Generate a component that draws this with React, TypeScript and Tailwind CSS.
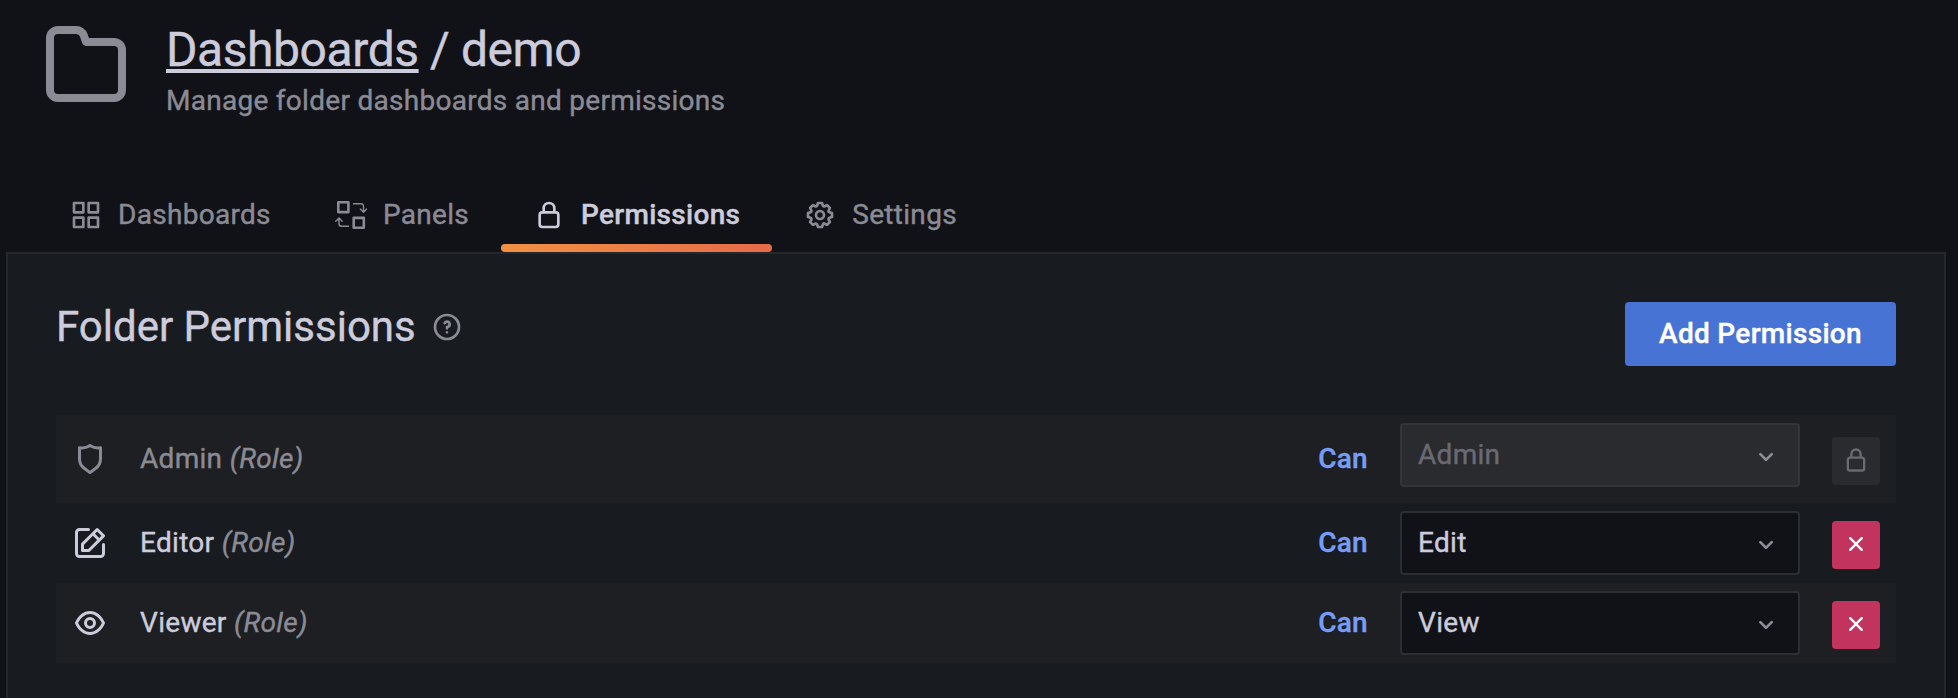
import type { ReactNode } from "react";

const PATHS = {
  folder:
    "M19,5.5H12.72l-.32-1a3,3,0,0,0-2.84-2H5a3,3,0,0,0-3,3v13a3,3,0,0,0,3,3H19a3,3,0,0,0,3-3V8.5A3,3,0,0,0,19,5.5Zm1,13a1,1,0,0,1-1,1H5a1,1,0,0,1-1-1V5.5a1,1,0,0,1,1-1H9.56a1,1,0,0,1,.95.68l.54,1.64A1,1,0,0,0,12,7.5h7a1,1,0,0,1,1,1Z",
  apps: "M10,13H3a1,1,0,0,0-1,1v7a1,1,0,0,0,1,1h7a1,1,0,0,0,1-1V14A1,1,0,0,0,10,13ZM9,20H4V15H9ZM21,2H14a1,1,0,0,0-1,1v7a1,1,0,0,0,1,1h7a1,1,0,0,0,1-1V3A1,1,0,0,0,21,2ZM20,9H15V4h5Zm1,4H14a1,1,0,0,0-1,1v7a1,1,0,0,0,1,1h7a1,1,0,0,0,1-1V14A1,1,0,0,0,21,13Zm-1,7H15V15h5ZM10,2H3A1,1,0,0,0,2,3v7a1,1,0,0,0,1,1h7a1,1,0,0,0,1-1V3A1,1,0,0,0,10,2ZM9,9H4V4H9Z",
  lock: "M17,9V7A5,5,0,0,0,7,7V9a3,3,0,0,0-3,3v7a3,3,0,0,0,3,3H17a3,3,0,0,0,3-3V12A3,3,0,0,0,17,9ZM9,7a3,3,0,0,1,6,0V9H9Zm9,12a1,1,0,0,1-1,1H7a1,1,0,0,1-1-1V12a1,1,0,0,1,1-1H17a1,1,0,0,1,1,1Z",
  cog: "M21.32,9.55l-1.89-.63.89-1.78A1,1,0,0,0,20.13,6L18,3.87a1,1,0,0,0-1.15-.19l-1.78.89-.63-1.89A1,1,0,0,0,13.5,2h-3a1,1,0,0,0-.95.68L8.92,4.57,7.14,3.68A1,1,0,0,0,6,3.87L3.87,6a1,1,0,0,0-.19,1.15l.89,1.78-1.89.63A1,1,0,0,0,2,10.5v3a1,1,0,0,0,.68.95l1.89.63-.89,1.78A1,1,0,0,0,3.87,18L6,20.13a1,1,0,0,0,1.15.19l1.78-.89.63,1.89a1,1,0,0,0,.95.68h3a1,1,0,0,0,.95-.68l.63-1.89,1.78.89A1,1,0,0,0,18,20.13L20.13,18a1,1,0,0,0,.19-1.15l-.89-1.78,1.89-.63A1,1,0,0,0,22,13.5v-3A1,1,0,0,0,21.32,9.55ZM20,12.78l-1.2.4A2,2,0,0,0,17.64,16l.57,1.14-1.1,1.1L16,17.64a2,2,0,0,0-2.79,1.16l-.4,1.2H11.22l-.4-1.2A2,2,0,0,0,8,17.64l-1.14.57-1.1-1.1L6.36,16A2,2,0,0,0,5.2,13.18L4,12.78V11.22l1.2-.4A2,2,0,0,0,6.36,8L5.79,6.89l1.1-1.1L8,6.36A2,2,0,0,0,10.82,5.2l.4-1.2h1.56l.4,1.2A2,2,0,0,0,16,6.36l1.14-.57,1.1,1.1L17.64,8a2,2,0,0,0,1.16,2.79l1.2.4ZM12,8a4,4,0,1,0,4,4A4,4,0,0,0,12,8Zm0,6a2,2,0,1,1,2-2A2,2,0,0,1,12,14Z",
  question:
    "M11.29,15.29a1.58,1.58,0,0,0-.12.15.76.76,0,0,0-.09.18.64.64,0,0,0-.06.18,1.36,1.36,0,0,0,0,.2.84.84,0,0,0,.08.38.9.9,0,0,0,.54.54.94.94,0,0,0,.76,0,.9.9,0,0,0,.54-.54A1,1,0,0,0,13,16a1,1,0,0,0-.29-.71A1,1,0,0,0,11.29,15.29ZM12,2A10,10,0,1,0,22,12,10,10,0,0,0,12,2Zm0,18a8,8,0,1,1,8-8A8,8,0,0,1,12,20ZM12,7A3,3,0,0,0,9.4,8.5a1,1,0,1,0,1.73,1A1,1,0,0,1,12,9a1,1,0,0,1,0,2,1,1,0,0,0-1,1v1a1,1,0,0,0,2,0v-.18A3,3,0,0,0,12,7Z",
  shield:
    "M19.63,3.65a1,1,0,0,0-.84-.2,8,8,0,0,1-6.22-1.27,1,1,0,0,0-1.14,0A8,8,0,0,1,5.21,3.45a1,1,0,0,0-.84.2A1,1,0,0,0,4,4.43v7.45a9,9,0,0,0,3.77,7.33l3.65,2.6a1,1,0,0,0,1.16,0l3.65-2.6A9,9,0,0,0,20,11.88V4.43A1,1,0,0,0,19.63,3.65ZM18,11.88a7,7,0,0,1-2.93,5.7L12,19.77,8.93,17.58A7,7,0,0,1,6,11.88V5.58a10,10,0,0,0,6-1.39,10,10,0,0,0,6,1.39Z",
  edit: "M21,12a1,1,0,0,0-1,1v6a1,1,0,0,1-1,1H5a1,1,0,0,1-1-1V5A1,1,0,0,1,5,4h6a1,1,0,0,0,0-2H5A3,3,0,0,0,2,5V19a3,3,0,0,0,3,3H19a3,3,0,0,0,3-3V13A1,1,0,0,0,21,12ZM6,12.76V17a1,1,0,0,0,1,1h4.24a1,1,0,0,0,.71-.29l6.92-6.93h0L21.71,8a1,1,0,0,0,0-1.42L17.47,2.29a1,1,0,0,0-1.42,0L13.23,5.12h0L6.29,12.05A1,1,0,0,0,6,12.76ZM16.76,4.41l2.83,2.83L18.17,8.66,15.34,5.83ZM8,13.17l5.93-5.93,2.83,2.83L10.83,16H8Z",
  eye: "M21.92,11.6C19.9,6.91,16.1,4,12,4S4.1,6.91,2.08,11.6a1,1,0,0,0,0,.8C4.1,17.09,7.9,20,12,20s7.9-2.91,9.92-7.6A1,1,0,0,0,21.92,11.6ZM12,18c-3.17,0-6.17-2.29-7.9-6C5.83,8.29,8.83,6,12,6s6.17,2.29,7.9,6C18.17,15.71,15.17,18,12,18ZM12,8a4,4,0,1,0,4,4A4,4,0,0,0,12,8Zm0,6a2,2,0,1,1,2-2A2,2,0,0,1,12,14Z",
  angleDown:
    "M17,9.17a1,1,0,0,0-1.41,0L12,12.71,8.46,9.17a1,1,0,0,0-1.41,0,1,1,0,0,0,0,1.42l4.24,4.24a1,1,0,0,0,1.42,0L17,10.59A1,1,0,0,0,17,9.17Z",
  times:
    "M13.41,12l4.3-4.29a1,1,0,1,0-1.42-1.42L12,10.59,7.71,6.29A1,1,0,0,0,6.29,7.71L10.59,12l-4.3,4.29a1,1,0,0,0,0,1.42,1,1,0,0,0,1.42,0L12,13.41l4.29,4.3a1,1,0,0,0,1.42,0,1,1,0,0,0,0-1.42Z",
};

type IconName = keyof typeof PATHS;

function Icon({ name, className }: { name: IconName; className: string }) {
  return (
    <svg viewBox="0 0 24 24" fill="currentColor" className={`shrink-0 ${className}`} aria-hidden="true">
      <path d={PATHS[name]} />
    </svg>
  );
}

function PanelsIcon() {
  return (
    <svg viewBox="0 0 32 32" fill="none" stroke="currentColor" className="size-8 shrink-0" aria-hidden="true">
      <rect x="3.3" y="3.3" width="10.1" height="9.8" strokeWidth="2.6" strokeLinejoin="round" />
      <rect x="18.700" y="18.9" width="10.1" height="9.8" strokeWidth="2.6" strokeLinejoin="round" />
      <path d="M18.500 4.800H26a2.500 2.500 0 0 1 2.500 2.500v5.500M25.300 10l3.200 3.200 3.200-3.200" strokeWidth="1.400" strokeLinecap="round" strokeLinejoin="round" />
      <path d="M13.500 27.300H6.500a2.500 2.500 0 0 1-2.500-2.500V19.300M.8 22.200L4 19l3.200 3.200" strokeWidth="1.400" strokeLinecap="round" strokeLinejoin="round" />
    </svg>
  );
}

function Tab({ icon, label, active = false }: { icon: ReactNode; label: string; active?: boolean }) {
  return (
    <a
      className={`relative flex h-[76px] items-start gap-4 px-8 pt-[23px] leading-8 ${
        active ? "font-medium text-[#ccccdc]" : "text-[#8b8b96]"
      }`}
    >
      {icon}
      <span>{label}</span>
      {active && (
        <span className="absolute inset-x-0 bottom-0 h-2 rounded-lg bg-linear-to-r from-[#f29043] to-[#e56b49]" />
      )}
    </a>
  );
}

function Select({ value, disabled = false }: { value: string; disabled?: boolean }) {
  return (
    <div
      className={`flex h-16 w-[400px] items-center justify-between rounded border-2 px-4 ${
        disabled ? "border-[#343539] bg-[#2a2b2f] text-[#6a6a74]" : "border-[#2d2e33] bg-[#111217] text-[#ccccdc]"
      }`}
    >
      <span>{value}</span>
      <Icon name="angleDown" className="mt-1 size-8 text-[#8d8d99]" />
    </div>
  );
}

function Row({
  icon,
  role,
  level,
  locked = false,
  className,
}: {
  icon: IconName;
  role: string;
  level: string;
  locked?: boolean;
  className: string;
}) {
  return (
    <div className={`flex items-start px-4 ${className}`}>
      <div className={`flex h-full items-center ${locked ? "text-[#8b8b96]" : "text-[#ccccdc]"}`}>
        <Icon name={icon} className="size-9" />
        <span className="ml-8">
          {role} <em className="text-[#8b8b96]">(Role)</em>
        </span>
      </div>
      <div className="ml-auto flex h-full items-center font-medium text-[#769df9]">Can</div>
      <div className="mt-2 ml-8">
        <Select value={level} disabled={locked} />
      </div>
      <div className="ml-8 flex h-full items-center">
        <button
          className={`mt-1 flex size-12 items-center justify-center rounded pb-0.5 ${
            locked ? "bg-[#2a2b2f] text-[#6a6a74]" : "bg-[#c2345d] text-white"
          }`}
        >
          <Icon name={locked ? "lock" : "times"} className="size-7" />
        </button>
      </div>
    </div>
  );
}

export default function App() {
  return (
    <div className="h-[698px] w-[1958px] overflow-hidden bg-[#111217] pr-3 pl-1.5 font-['Roboto',sans-serif] text-[28px] leading-[44px] tracking-[0.3px] text-[#ccccdc] [-webkit-text-stroke:0.4px]">
      <header className="flex h-[176px] pt-4 pl-8">
        <Icon name="folder" className="size-24 text-[#8b8b96]" />
        <div className="ml-8 pt-1">
          <h1 className="text-[48px] leading-[60px] tracking-[-0.43px]">
            <a className="underline decoration-4 underline-offset-[3px]">Dashboards</a> / demo
          </h1>
          <div className="-mt-px tracking-[0.28px] text-[#8b8b96]">Manage folder dashboards and permissions</div>
        </div>
      </header>
      <nav className="flex pl-8">
        <Tab icon={<Icon name="apps" className="size-8" />} label="Dashboards" />
        <Tab icon={<PanelsIcon />} label="Panels" />
        <Tab icon={<Icon name="lock" className="size-8" />} label="Permissions" active />
        <Tab icon={<Icon name="cog" className="size-8" />} label="Settings" />
      </nav>
      <main className="h-[460px] border-2 border-[#25272b] bg-[#181b1f] px-12 pt-12">
        <div className="flex h-[113px] items-start">
          <h2 className="text-[42px] leading-[50px] tracking-normal">Folder Permissions</h2>
          <Icon name="question" className="mt-[9px] ml-[15px] size-8 text-[#8b8b96]" />
          <button className="ml-auto h-16 w-[271px] rounded bg-[#4773d4] font-medium text-white">
            Add Permission
          </button>
        </div>
        <Row icon="shield" role="Admin" level="Admin" locked className="h-[88px] bg-[#1e1f22]" />
        <Row icon="edit" role="Editor" level="Edit" className="h-20" />
        <Row icon="eye" role="Viewer" level="View" className="h-20 bg-[#1e1f22]" />
      </main>
    </div>
  );
}
